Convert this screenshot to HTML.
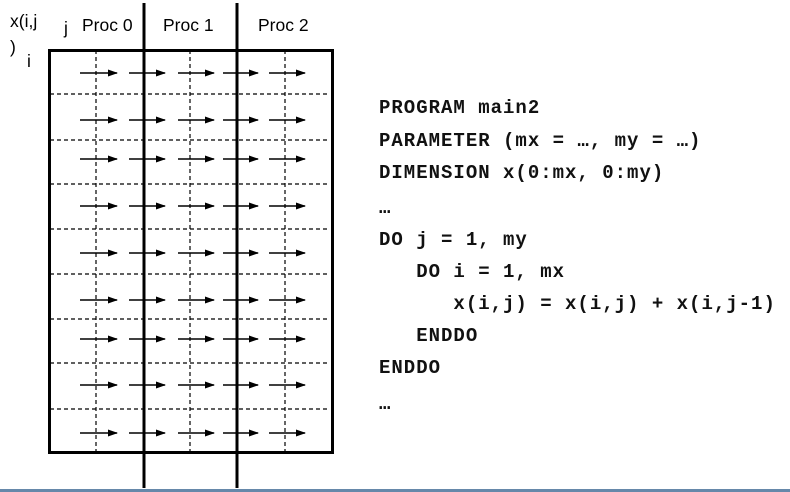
<!DOCTYPE html>
<html><head><style>
body{margin:0;width:790px;height:492px;background:#fff;overflow:hidden;position:relative;font-family:"Liberation Sans",sans-serif}
.t{position:absolute;font-size:17.5px;color:#000;line-height:1}
.code{position:absolute;left:379px;font-family:"Liberation Mono",monospace;font-weight:bold;font-size:19px;letter-spacing:1px;color:#111;line-height:1;white-space:pre}
</style></head><body>
<svg width="790" height="492" style="position:absolute;left:0;top:0">
<defs><marker id="a" markerWidth="10" markerHeight="7" refX="9" refY="3.5" orient="auto" markerUnits="userSpaceOnUse"><path d="M0,0 L10,3.5 L0,7 Z" fill="#000"/></marker></defs>
<g stroke="#000" stroke-width="1.2" stroke-dasharray="4,3">
<line x1="96" y1="50" x2="96" y2="452"/><line x1="190" y1="50" x2="190" y2="452"/><line x1="285" y1="50" x2="285" y2="452"/>
<line x1="50" y1="94" x2="330" y2="94"/><line x1="50" y1="140" x2="330" y2="140"/><line x1="50" y1="184" x2="330" y2="184"/><line x1="50" y1="229" x2="330" y2="229"/><line x1="50" y1="274" x2="330" y2="274"/><line x1="50" y1="319" x2="330" y2="319"/><line x1="50" y1="363" x2="330" y2="363"/><line x1="50" y1="409" x2="330" y2="409"/>
</g>
<g stroke="#000" stroke-width="1.4" marker-end="url(#a)" id="r">
</g>
<rect x="49.5" y="50.5" width="283" height="402" fill="none" stroke="#000" stroke-width="3"/>
<line x1="144" y1="3" x2="144" y2="488" stroke="#000" stroke-width="3"/>
<line x1="237" y1="3" x2="237" y2="488" stroke="#000" stroke-width="3"/>
<rect x="0" y="489" width="790" height="3" fill="#6688aa"/>
</svg>
<script>
var g=document.getElementById('r'),ys=[73,120,159,206,253,300,339,385,433],xs=[[80,117],[129,165],[178,214],[223,258],[269,305]],s='';
ys.forEach(function(y){xs.forEach(function(x){s+='<line x1="'+x[0]+'" y1="'+y+'" x2="'+x[1]+'" y2="'+y+'"/>';});});
g.innerHTML=s;
</script>
<div class="t" style="left:10px;top:13px">x(i,j</div>
<div class="t" style="left:10px;top:39px">)</div>
<div class="t" style="left:27px;top:53px">i</div>
<div class="t" style="left:64px;top:20px">j</div>
<div class="t" style="left:82px;top:17px">Proc 0</div>
<div class="t" style="left:163px;top:17px">Proc 1</div>
<div class="t" style="left:258px;top:17px">Proc 2</div>
<div class="code" style="top:99px">PROGRAM main2</div>
<div class="code" style="top:132px">PARAMETER (mx = …, my = …)</div>
<div class="code" style="top:164px">DIMENSION x(0:mx, 0:my)</div>
<div class="code" style="top:199px">…</div>
<div class="code" style="top:231px">DO j = 1, my</div>
<div class="code" style="top:263px">   DO i = 1, mx</div>
<div class="code" style="top:295px">      x(i,j) = x(i,j) + x(i,j-1)</div>
<div class="code" style="top:327px">   ENDDO</div>
<div class="code" style="top:359px">ENDDO</div>
<div class="code" style="top:395px">…</div>
</body></html>
